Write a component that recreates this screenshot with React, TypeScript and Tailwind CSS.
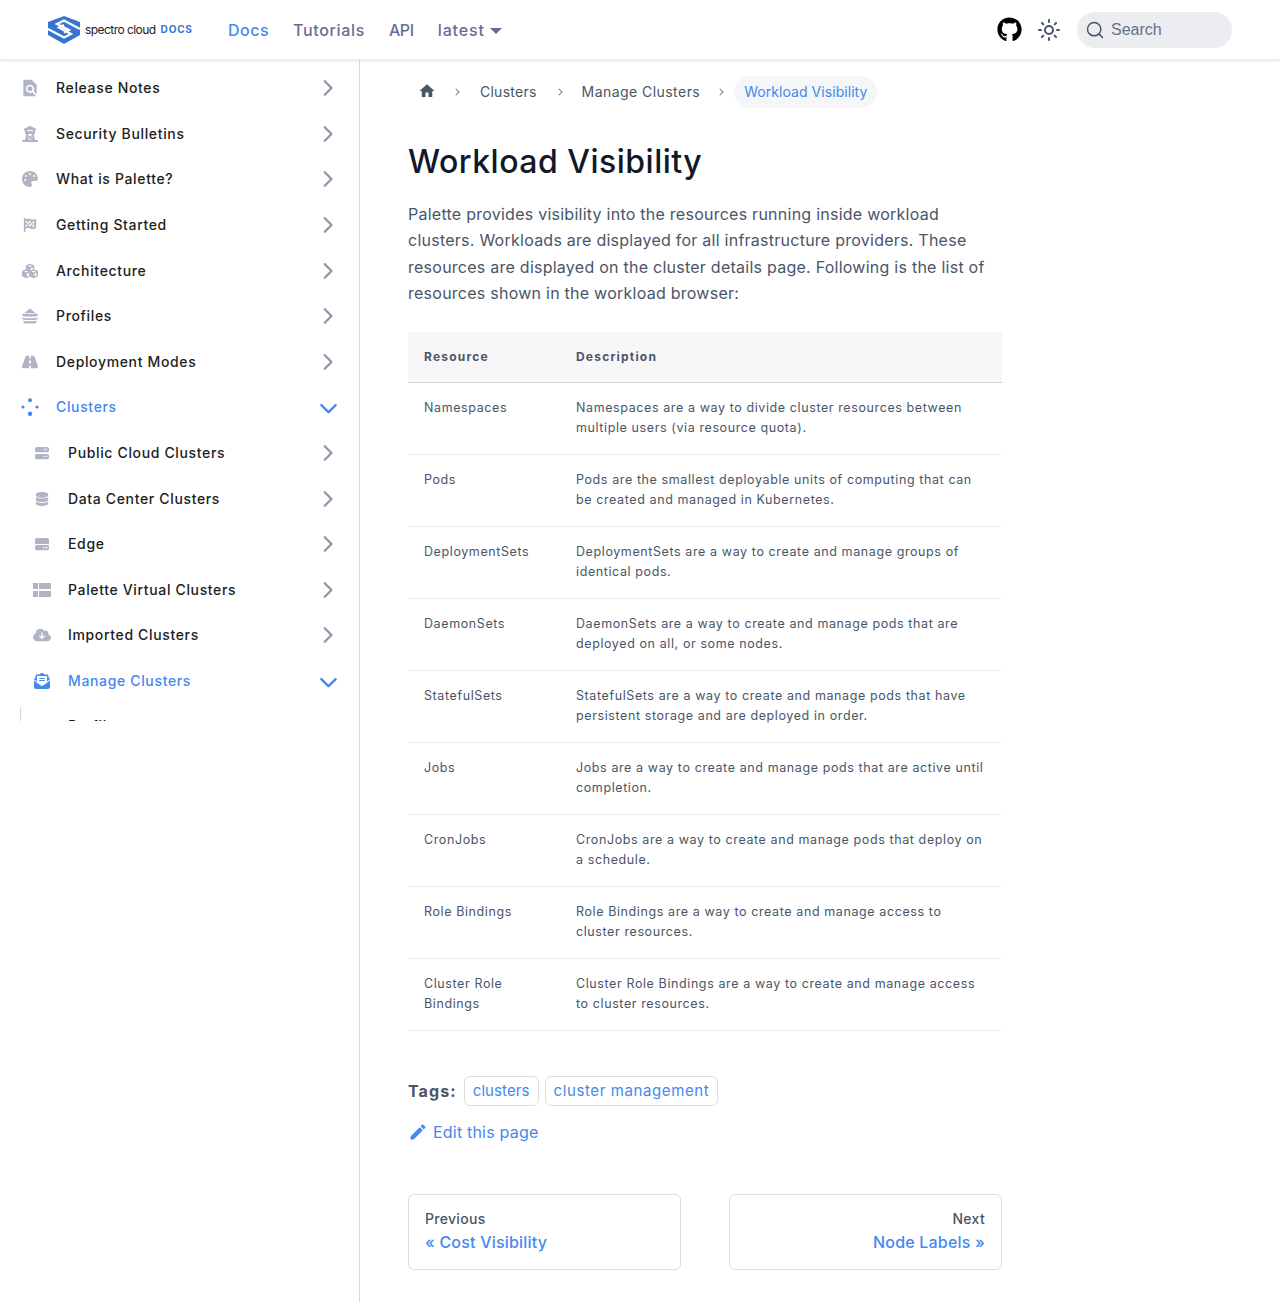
import type { ReactNode } from 'react';
import {
  FaChevronDown,
  FaChevronRight,
  FaCloudArrowDown,
  FaCubes,
  FaDatabase,
  FaEnvelopeOpenText,
  FaFlagCheckered,
  FaGithub,
  FaHardDrive,
  FaPalette,
  FaRoad,
  FaServer,
  FaTowerObservation
} from 'react-icons/fa6';
import { MdEdit, MdFindInPage, MdHome } from 'react-icons/md';
import { Search, Sun } from 'lucide-react';

const font = "font-['Inter','Noto_Sans',sans-serif]";

type NavItem = {
  label: string;
  icon: ReactNode;
  active?: boolean;
  nested?: boolean;
};

function ClusterDots() {
  return (
    <svg viewBox="0 0 18 18" className="w-[18px] h-[18px]" fill="currentColor">
      <circle cx="9" cy="2.2" r="2" />
      <circle cx="2" cy="9" r="1.6" />
      <circle cx="16" cy="9" r="1.6" />
      <circle cx="9" cy="15.8" r="2.2" />
    </svg>
  );
}

function PlatesIcon() {
  return (
    <svg viewBox="0 0 18 16" className="w-[18px] h-4" fill="currentColor">
      <path d="M3.5 5 L9 0.5 L14.5 5 Z" />
      <path d="M1 5.8 H17 C17 7.8 15.5 8.6 14 8.6 H4 C2.5 8.6 1 7.8 1 5.8 Z" />
      <path d="M1 9.2 C2 10 3 10.2 4 10.2 H14 C15 10.2 16 10 17 9.2 C17 11 15.5 12 14 12 H4 C2.5 12 1 11 1 9.2 Z" />
      <path d="M2 12.4 C3 13 3.5 13.2 4 13.2 H14 C14.5 13.2 15 13 16 12.4 C15.5 14.6 14.5 15.5 13 15.5 H5 C3.5 15.5 2.5 14.6 2 12.4 Z" />
    </svg>
  );
}

function SplitTableIcon() {
  return (
    <svg viewBox="0 0 18 14" className="w-[18px] h-3.5" fill="currentColor">
      <rect x="0" y="0" width="5" height="6" />
      <rect x="6" y="0" width="12" height="6" />
      <rect x="0" y="8" width="5" height="6" />
      <rect x="6" y="8" width="12" height="6" />
    </svg>
  );
}

const navItems: NavItem[] = [
  { label: 'Release Notes', icon: <MdFindInPage className="w-5 h-5" /> },
  { label: 'Security Bulletins', icon: <FaTowerObservation className="w-4 h-4" /> },
  { label: 'What is Palette?', icon: <FaPalette className="w-4 h-4" /> },
  { label: 'Getting Started', icon: <FaFlagCheckered className="w-3.5 h-3.5" /> },
  { label: 'Architecture', icon: <FaCubes className="w-4 h-4" /> },
  { label: 'Profiles', icon: <PlatesIcon /> },
  { label: 'Deployment Modes', icon: <FaRoad className="w-4 h-4" /> },
  { label: 'Clusters', icon: <ClusterDots />, active: true },
  { label: 'Public Cloud Clusters', icon: <FaServer className="w-3.5 h-3.5" />, nested: true },
  { label: 'Data Center Clusters', icon: <FaDatabase className="w-3.5 h-3.5" />, nested: true },
  { label: 'Edge', icon: <FaHardDrive className="w-3.5 h-3.5" />, nested: true },
  { label: 'Palette Virtual Clusters', icon: <SplitTableIcon />, nested: true },
  { label: 'Imported Clusters', icon: <FaCloudArrowDown className="w-[18px] h-[18px]" />, nested: true },
  { label: 'Manage Clusters', icon: <FaEnvelopeOpenText className="w-4 h-4" />, nested: true, active: true }
];

const rows = [
  ['Namespaces', 'Namespaces are a way to divide cluster resources between multiple users (via resource quota).'],
  ['Pods', 'Pods are the smallest deployable units of computing that can be created and managed in Kubernetes.'],
  ['DeploymentSets', 'DeploymentSets are a way to create and manage groups of identical pods.'],
  ['DaemonSets', 'DaemonSets are a way to create and manage pods that are deployed on all, or some nodes.'],
  ['StatefulSets', 'StatefulSets are a way to create and manage pods that have persistent storage and are deployed in order.'],
  ['Jobs', 'Jobs are a way to create and manage pods that are active until completion.'],
  ['CronJobs', 'CronJobs are a way to create and manage pods that deploy on a schedule.'],
  ['Role Bindings', 'Role Bindings are a way to create and manage access to cluster resources.'],
  ['Cluster Role Bindings', 'Cluster Role Bindings are a way to create and manage access to cluster resources.']
];

function Logo() {
  return (
    <svg viewBox="0 0 32 28" className="w-8 h-7">
      <path d="M16 0 L32 6 L32 19 L16 28 L0 19 L0 6 Z" fill="#3575cf" />
      <path
        d="M0 13 L16 21.5 L23 18 L11 11.5 L16 9 M32 13 L16 4.5 L9 8 L21 14 L16 16.5"
        fill="none"
        stroke="#ffffff"
        strokeWidth="2.2"
      />
    </svg>
  );
}

function Header() {
  return (
    <header className="h-[60px] flex items-center bg-white shadow-[0_1px_2px_rgba(0,0,0,0.1)] border-b border-[#eeeeee] relative z-10">
      <div className="flex items-center ml-12 w-[180px]">
        <Logo />
        <span className="ml-[5px] text-[12px] tracking-[-0.55px] text-[#222222]">spectro cloud</span>
        <span className="ml-[5px] text-[10px] font-bold tracking-[0.8px] text-[#3575cf]">DOCS</span>
      </div>
      <nav className="flex items-center text-[16px] font-medium">
        <span className="text-[#4488f0] tracking-[0.5px]">Docs</span>
        <span className="ml-6 text-[#64708f] tracking-[0.65px]">Tutorials</span>
        <span className="ml-6 text-[#64708f] tracking-[-0.4px]">API</span>
        <span className="ml-6 text-[#64708f] tracking-[0.9px] flex items-center">
          latest
          <span className="ml-[5px] mt-0.5 border-x-[6px] border-x-transparent border-t-[6px] border-t-[#64708f]" />
        </span>
      </nav>
      <div className="ml-auto flex items-center mr-12">
        <FaGithub className="w-[25px] h-[25px] text-black" />
        <Sun className="w-6 h-6 ml-[15px] text-[#475569]" strokeWidth={2} />
        <div className="ml-4 w-[155px] h-9 rounded-full bg-[#ebedf0] flex items-center pl-2 font-['Liberation_Sans',sans-serif] text-[16px] text-[#64708f]">
          <Search className="w-5 h-5 text-[#475569]" strokeWidth={1.75} />
          <span className="ml-1.5">Search</span>
        </div>
      </div>
    </header>
  );
}

function SidebarRow({ label, icon, active, nested }: NavItem) {
  return (
    <div className={`h-[45.6px] flex items-center text-[14px] font-medium tracking-[0.65px] ${nested ? 'pl-[32px]' : 'pl-5'} pr-[21px] ${active ? 'text-[#4488f0]' : 'text-[#1c1e21]'}`}>
      <div className={`w-5 flex justify-center ${active ? 'text-[#4488f0]' : 'text-[#b0b4c4]'}`}>{icon}</div>
      <span className="ml-4 -mt-px">{label}</span>
      <div className={`ml-auto w-5 flex justify-center ${active ? 'text-[#4488f0]' : 'text-[#9295a8]'}`}>
        {active ? <FaChevronDown className="w-[19px] h-[19px]" /> : <FaChevronRight className="w-[18px] h-[18px] mr-0.5" />}
      </div>
    </div>
  );
}

function Sidebar() {
  return (
    <aside className="w-[360px] shrink-0 border-r border-[#d5d7dc] pt-[5.5px]">
      <div className="h-[655.5px] overflow-hidden">
        {navItems.map(item => (
          <SidebarRow key={item.label} {...item} />
        ))}
        <div className="ml-5 mt-[3px] h-[15px] border-l border-[#d5d7dc] overflow-hidden text-[14px] leading-5 font-medium tracking-[0.65px] pl-[47px] pt-[9px] text-[#1c1e21]">
          Profiles
        </div>
      </div>
    </aside>
  );
}

function Breadcrumb() {
  const sep = <FaChevronRight className="w-2 h-2 text-[#64708f]" />;
  return (
    <div className="flex items-center h-8 text-[14px] leading-5 text-[#4a5568] tracking-[0.25px]">
      <MdHome className="w-[18px] h-[18px] ml-[10px] -mt-0.5 text-[#4a5568]" />
      <span className="ml-[17px]">{sep}</span>
      <span className="ml-[19px] -mt-px">Clusters</span>
      <span className="ml-[19px]">{sep}</span>
      <span className="ml-[18px] -mt-px tracking-[0.45px]">Manage Clusters</span>
      <span className="ml-[17px]">{sep}</span>
      <span className="ml-[9px] px-[10px] h-8 flex items-center rounded-full bg-[#f5f6f7] text-[#4488f0] tracking-[0.05px]">Workload Visibility</span>
    </div>
  );
}

function WorkloadTable() {
  return (
    <table className="w-full mt-[25px] text-[12.5px] text-[#4a5568] tracking-[0.6px] leading-5 table-fixed border-collapse">
      <thead>
        <tr className="h-[51px] bg-[#f7f7f7] border-b border-[#cfd1d6] text-left text-[12px] font-bold tracking-[1.2px] text-[#4a5568]">
          <th className="w-[152px] pl-4 font-bold">Resource</th>
          <th className="pl-4 font-bold">Description</th>
        </tr>
      </thead>
      <tbody>
        {rows.map(([name, description]) => (
          <tr key={name} className="h-[72px] border-b border-[#ebedf0] align-top">
            <td className="pl-4 pr-4 pt-[15px]">{name}</td>
            <td className="pl-4 pr-4 pt-[15px]">{description}</td>
          </tr>
        ))}
      </tbody>
    </table>
  );
}

function PagerCard({ title, label, right }: { title: string; label: string; right?: boolean }) {
  return (
    <div className={`w-[273px] h-[76px] rounded-md border border-[#dadde1] px-4 pt-[14px] ${right ? 'text-right' : ''}`}>
      <div className="text-[14px] font-medium tracking-[0.3px] text-[#4a5568] leading-5">{title}</div>
      <div className="mt-px text-[16px] font-medium tracking-[0.2px] text-[#4488f0] leading-6">{label}</div>
    </div>
  );
}

export default function App() {
  return (
    <div className={`${font} w-[1280px] h-[1302px] overflow-hidden bg-white flex flex-col`}>
      <Header />
      <div className="flex flex-1">
        <Sidebar />
        <main className="w-[594px] ml-12 pt-4">
          <Breadcrumb />
          <h1 className="mt-[34px] text-[32px] leading-[40px] font-medium tracking-[0.5px] text-[#111827]">Workload Visibility</h1>
          <p className="mt-[19px] text-[16px] leading-[26.4px] tracking-[0.25px] text-[#4a5568]">
            Palette provides visibility into the resources running inside workload clusters. Workloads are displayed for all infrastructure providers. These resources are displayed on the cluster details page. Following is the list of resources shown in the workload browser:
          </p>
          <WorkloadTable />
          <div className="mt-[45px] flex items-center text-[15px]">
            <span className="font-bold text-[16px] tracking-[1.1px] text-[#4a5568] mr-[7px]">Tags:</span>
            <span className="h-[30px] px-2 flex items-center rounded-md border border-[#dadde1] text-[#4488f0] tracking-[0.1px]">clusters</span>
            <span className="ml-1.5 h-[30px] px-2 flex items-center rounded-md border border-[#dadde1] text-[#4488f0] tracking-[0.6px]">cluster management</span>
          </div>
          <div className="mt-[14px] flex items-center text-[16px] tracking-[0.2px] text-[#4488f0]">
            <MdEdit className="w-5 h-5" />
            <span className="ml-[5px]">Edit this page</span>
          </div>
          <div className="mt-[50px] flex justify-between">
            <PagerCard title="Previous" label="« Cost Visibility" />
            <PagerCard title="Next" label="Node Labels »" right />
          </div>
        </main>
      </div>
    </div>
  );
}
